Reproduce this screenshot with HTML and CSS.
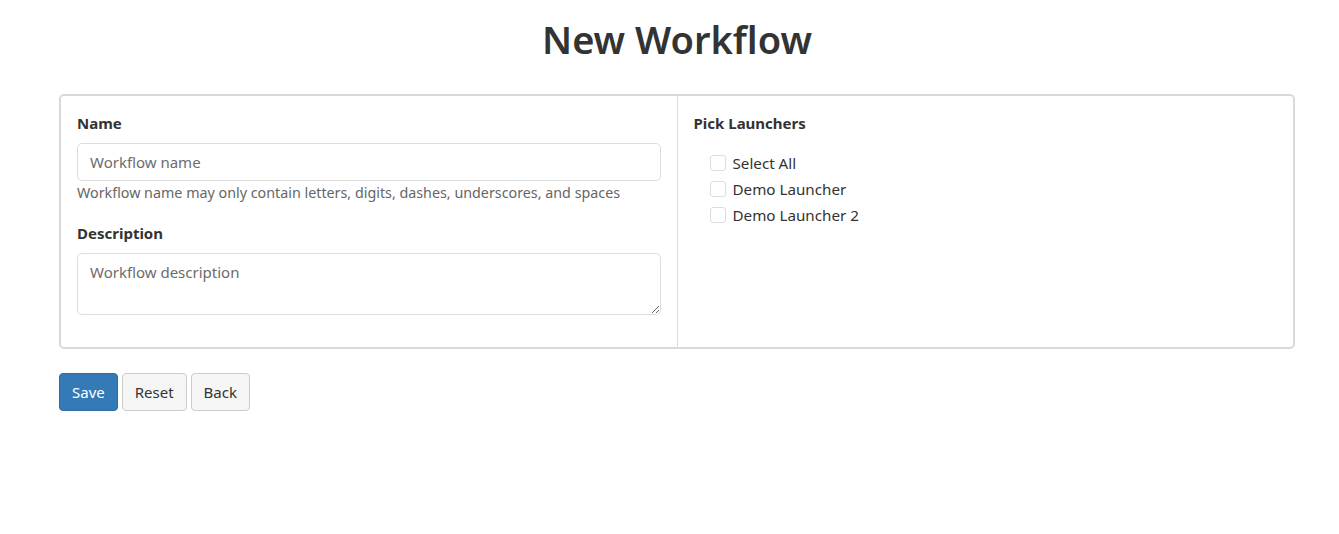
FILE: index.html
```html
<!DOCTYPE html>
<html lang="en">
<head>
    <meta charset="UTF-8">
    <title>New Workflow</title>
    <link rel="stylesheet" href="styles.css">
</head>
<body>

<div class="page">
    <h1 class="page-title">New Workflow</h1>

    <form class="workflow-form">
        <div class="panel">
            <div class="panel-col">
                <div class="field">
                    <label class="field-label" for="wf-name">Name</label>
                    <input class="form-input" id="wf-name" type="text" placeholder="Workflow name"/>
                    <p class="help-text">Workflow name may only contain letters, digits, dashes, underscores, and spaces</p>
                </div>
                <div class="field field-desc">
                    <label class="field-label" for="wf-desc">Description</label>
                    <textarea class="form-input form-textarea" id="wf-desc" placeholder="Workflow description"></textarea>
                </div>
            </div>
            <div class="panel-col">
                <div class="field-label">Pick Launchers</div>
                <ul class="launcher-list">
                    <li><label><input class="check" type="checkbox"/> Select All</label></li>
                    <li><label><input class="check" type="checkbox"/> Demo Launcher</label></li>
                    <li><label><input class="check" type="checkbox"/> Demo Launcher 2</label></li>
                </ul>
            </div>
        </div>

        <div class="actions">
            <button class="btn btn-primary" type="submit">Save</button>
            <button class="btn" type="reset">Reset</button>
            <button class="btn" type="button">Back</button>
        </div>
    </form>
</div>

</body>
</html>
```

FILE: styles.css
```css
body {
    margin: 0;
    font-family: "Noto Sans", "Open Sans", sans-serif;
    font-size: 15px;
    color: #333;
    background: #fff;
}

.page {
    padding: 0 44px 0 59px;
}

.page-title {
    margin: 17px 0 33px;
    font-size: 38px;
    line-height: 44px;
    font-weight: 600;
    text-align: center;
    color: #333;
}

.panel {
    display: flex;
    border: 2px solid #d9d9d9;
    border-radius: 5px;
}

.panel-col {
    flex: 1;
    padding: 17px 16px 32px 16px;
}

.panel-col + .panel-col {
    border-left: 1px solid #ddd;
}

.field-label {
    display: block;
    font-weight: 700;
    line-height: 20px;
    color: #333;
}

.form-input {
    display: block;
    box-sizing: border-box;
    width: 100%;
    height: 38px;
    margin-top: 10px;
    padding: 6px 12px;
    border: 1px solid #ddd;
    border-radius: 5px;
    font-family: inherit;
    font-size: 15px;
    color: #333;
}

.form-input::placeholder {
    color: #6c6c6c;
}

.form-textarea {
    height: 62px;
    padding-top: 8px;
    resize: vertical;
}

.help-text {
    margin: 2px 0 0;
    line-height: 20px;
    font-size: 14.3px;
    color: #666;
}

.field-desc {
    margin-top: 20px;
}

.launcher-list {
    list-style: none;
    margin: 17px 0 0;
    padding: 0 0 0 16px;
}

.launcher-list li {
    line-height: 26px;
    font-size: 15.2px;
}

.launcher-list label {
    display: flex;
    align-items: center;
    gap: 7px;
}

.check {
    appearance: none;
    width: 16px;
    height: 16px;
    margin: 0;
    border: 1px solid #ddd;
    border-radius: 3px;
    background: #fff;
}

.actions {
    margin-top: 24px;
    display: flex;
    gap: 4px;
}

.btn {
    height: 38px;
    padding: 0 12px;
    border: 1px solid #ccc;
    border-radius: 4px;
    background: #f5f5f5;
    font-family: inherit;
    font-size: 15px;
    color: #333;
}

.btn-primary {
    background: #337ab7;
    border-color: #2e6da4;
    color: #fff;
}
```
